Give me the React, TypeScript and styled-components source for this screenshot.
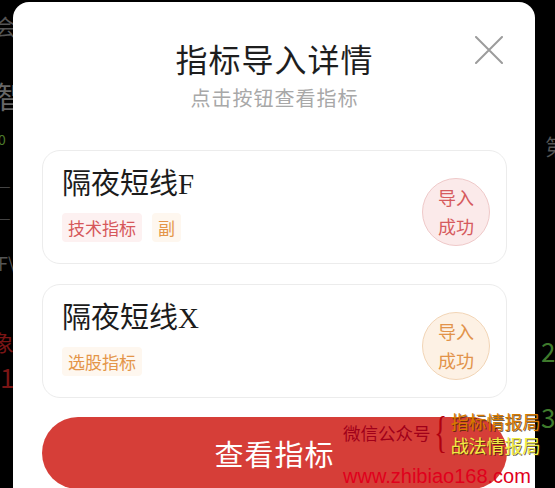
import React from "react";
import styled, { createGlobalStyle } from "styled-components";

const GlobalStyle = createGlobalStyle`
  html, body {
    margin: 0;
    padding: 0;
    background: #000;
  }
  * {
    box-sizing: border-box;
  }
`;

const Screen = styled.div`
  position: relative;
  width: 555px;
  height: 488px;
  overflow: hidden;
  background: #000;
  padding: 2px 20px 0 13px;
  font-family: "Noto Sans CJK SC", "Noto Sans", sans-serif;
`;

const BackGlyph = styled.span<{ x: number; y: number; size: number; color: string }>`
  position: absolute;
  left: ${({ x }) => x}px;
  top: ${({ y }) => y}px;
  font-size: ${({ size }) => size}px;
  line-height: 1;
  color: ${({ color }) => color};
  font-family: "Noto Sans CJK SC", "Liberation Sans", sans-serif;
`;

const Modal = styled.div`
  position: relative;
  width: 522px;
  height: 520px;
  background: #fff;
  border-radius: 16px 16px 0 0;
  padding: 34px 28px 0 29px;
  display: flex;
  flex-direction: column;
`;

const Header = styled.div`
  position: relative;
  display: flex;
  flex-direction: column;
  align-items: center;
  margin-bottom: 38px;
`;

const Title = styled.div`
  font-size: 32px;
  line-height: 44px;
  color: #1e1e1e;
  letter-spacing: 1px;
`;

const Subtitle = styled.div`
  margin-top: 4px;
  font-size: 20px;
  line-height: 28px;
  color: #a8a8a8;
  letter-spacing: 1px;
`;

const CloseButton = styled.div`
  position: absolute;
  right: 3px;
  top: -1px;
  width: 30px;
  height: 30px;
  display: flex;
  align-items: center;
  justify-content: center;
`;

const CardList = styled.div`
  display: flex;
  flex-direction: column;
  gap: 20px;
`;

const Card = styled.div`
  height: 114px;
  border: 1px solid #ececec;
  border-radius: 18px;
  padding: 13px 16px 0 19px;
  display: flex;
  justify-content: space-between;
  align-items: flex-start;
`;

const CardInfo = styled.div`
  display: flex;
  flex-direction: column;
`;

const CardTitle = styled.div`
  font-family: "Liberation Serif", "Noto Sans CJK SC", serif;
  font-size: 29px;
  line-height: 40px;
  color: #1c1c1c;
`;

const TagRow = styled.div`
  display: flex;
  gap: 10px;
  margin-top: 9px;
`;

const Tag = styled.span<{ tone: "red" | "orange" }>`
  display: inline-block;
  padding: 0 6px;
  height: 29px;
  line-height: 29px;
  font-size: 17px;
  border-radius: 4px;
  color: ${({ tone }) => (tone === "red" ? "#d6575a" : "#e49548")};
  background: ${({ tone }) => (tone === "red" ? "#fdf1f1" : "#fef7ef")};
`;

const Badge = styled.div<{ tone: "red" | "orange" }>`
  margin-top: 14px;
  width: 68px;
  height: 68px;
  border-radius: 50%;
  display: flex;
  flex-direction: column;
  align-items: center;
  justify-content: center;
  font-size: 18px;
  line-height: 29px;
  color: ${({ tone }) => (tone === "red" ? "#d65a5d" : "#e2934a")};
  background: ${({ tone }) => (tone === "red" ? "#fbeaea" : "#fdf1e4")};
  border: 1px solid ${({ tone }) => (tone === "red" ? "#efc9c9" : "#f2d5b6")};
`;

const ActionButton = styled.button`
  margin-top: 19px;
  width: 465px;
  height: 72px;
  border: none;
  border-radius: 36px;
  background: #d63e38;
  color: #fff;
  font-family: "Noto Sans CJK SC", sans-serif;
  font-size: 29px;
  letter-spacing: 1px;
  padding: 0;
  cursor: pointer;
`;

const Watermark = styled.div`
  position: absolute;
  left: 343px;
  top: 411px;
  display: flex;
  flex-direction: column;
  font-family: "Noto Sans CJK SC", sans-serif;
`;

const WatermarkTop = styled.div`
  display: flex;
  align-items: center;
`;

const WechatLabel = styled.span`
  font-size: 17.5px;
  color: #a0001a;
  line-height: 1;
`;

const Brace = styled.span`
  font-family: "Liberation Serif", serif;
  font-size: 44px;
  line-height: 44px;
  color: #b00010;
  margin: 0 0 0 -1px;
  transform: scaleX(0.6);
`;

const Names = styled.div`
  display: flex;
  flex-direction: column;
  gap: 4px;
`;

const Name = styled.span<{ color: string }>`
  font-size: 18px;
  line-height: 20px;
  color: ${({ color }) => color};
  text-shadow: 1px 1px 0 rgba(60, 30, 0, 0.7);
`;

const SiteUrl = styled.div`
  margin-top: 10px;
  font-family: "Liberation Sans", sans-serif;
  font-size: 20px;
  line-height: 22px;
  color: #e0001c;
`;

const cards = [
  { name: "隔夜短线F", tags: [{ text: "技术指标", tone: "red" as const }, { text: "副", tone: "orange" as const }], tone: "red" as const },
  { name: "隔夜短线X", tags: [{ text: "选股指标", tone: "orange" as const }], tone: "orange" as const },
];

const backGlyphs = [
  { t: "会", x: -6, y: 14, size: 22, color: "#555" },
  { t: "智", x: -4, y: 80, size: 30, color: "#666" },
  { t: "0", x: -2, y: 132, size: 14, color: "#4c7a2c" },
  { t: "—", x: -2, y: 178, size: 14, color: "#444" },
  { t: "—", x: -2, y: 210, size: 14, color: "#444" },
  { t: "F\\", x: -2, y: 254, size: 18, color: "#555" },
  { t: "象", x: -8, y: 330, size: 22, color: "#7a1515" },
  { t: "1", x: 0, y: 364, size: 26, color: "#7a1515" },
  { t: "第", x: 545, y: 134, size: 22, color: "#555" },
  { t: "2", x: 541, y: 338, size: 26, color: "#3f7a2c" },
  { t: "3", x: 541, y: 404, size: 26, color: "#3f7a2c" },
];

export default function App() {
  return (
    <>
      <GlobalStyle />
      <Screen>
        {backGlyphs.map((g, i) => (
          <BackGlyph key={i} x={g.x} y={g.y} size={g.size} color={g.color}>
            {g.t}
          </BackGlyph>
        ))}
        <Modal>
          <Header>
            <Title>指标导入详情</Title>
            <Subtitle>点击按钮查看指标</Subtitle>
            <CloseButton>
              <svg width="28" height="28" viewBox="0 0 28 28">
                <path d="M1 1 L27 27 M27 1 L1 27" stroke="#9c9c9c" strokeWidth="2" strokeLinecap="round" />
              </svg>
            </CloseButton>
          </Header>
          <CardList>
            {cards.map((c) => (
              <Card key={c.name}>
                <CardInfo>
                  <CardTitle>{c.name}</CardTitle>
                  <TagRow>
                    {c.tags.map((t) => (
                      <Tag key={t.text} tone={t.tone}>{t.text}</Tag>
                    ))}
                  </TagRow>
                </CardInfo>
                <Badge tone={c.tone}>
                  <span>导入</span>
                  <span>成功</span>
                </Badge>
              </Card>
            ))}
          </CardList>
          <ActionButton>查看指标</ActionButton>
        </Modal>
        <Watermark>
          <WatermarkTop>
            <WechatLabel>微信公众号</WechatLabel>
            <Brace>{"{"}</Brace>
            <Names>
              <Name color="#d67a00">指标情报局</Name>
              <Name color="#eeee44">战法情报局</Name>
            </Names>
          </WatermarkTop>
          <SiteUrl>www.zhibiao168.com</SiteUrl>
        </Watermark>
      </Screen>
    </>
  );
}
